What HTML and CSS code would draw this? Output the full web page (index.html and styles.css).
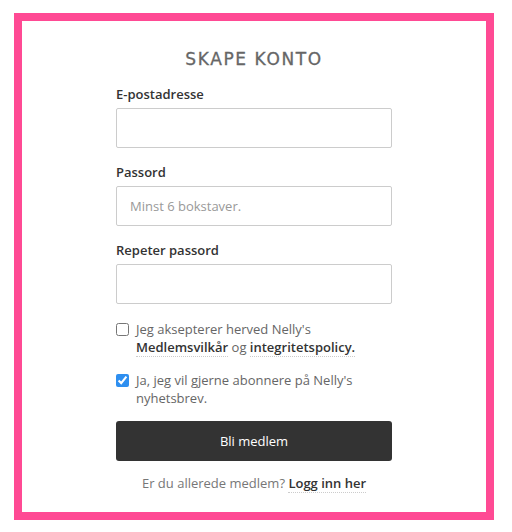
FILE: index.html
```html
<!DOCTYPE html>
<html lang="nb">
<head>
  <meta charset="UTF-8">
  <title>Skape konto</title>
  <link rel="stylesheet" href="styles.css">
</head>
<body>

  <div class="signup">
    <h2>SKAPE KONTO</h2>

    <label class="field-label" for="email">E-postadresse</label>
    <input type="text" id="email">

    <label class="field-label" for="password">Passord</label>
    <input type="password" id="password" placeholder="Minst 6 bokstaver.">

    <label class="field-label" for="repeat">Repeter passord</label>
    <input type="password" id="repeat">

    <label class="check first">
      <input type="checkbox">
      <span>Jeg aksepterer herved Nelly's <a href="#">Medlemsvilkår</a> og <a href="#">integritetspolicy.</a></span>
    </label>

    <label class="check">
      <input type="checkbox" checked>
      <span>Ja, jeg vil gjerne abonnere på Nelly's nyhetsbrev.</span>
    </label>

    <button>Bli medlem</button>

    <p class="login">Er du allerede medlem? <a href="#">Logg inn her</a></p>
  </div>

</body>
</html>
```

FILE: styles.css
```css
* {
  box-sizing: border-box;
}

body {
  margin: 0;
  padding: 0;
  background: #fff;
  font-family: "Open Sans", "Liberation Sans", sans-serif;
  font-size: 13px;
  color: #333;
}

.signup {
  width: 480px;
  margin: 13px 0 0 14px;
  padding: 26px 94px 19px;
  border: 8px solid #ff4a94;
  background: #fff;
}

h2 {
  margin: 0 0 13px;
  text-align: center;
  font-family: "DejaVu Sans", sans-serif;
  font-weight: normal;
  font-size: 17px;
  letter-spacing: 1.6px;
  line-height: 24px;
  color: #666;
  -webkit-text-stroke: 0.3px #666;
}

.field-label {
  display: block;
  font-weight: 600;
  line-height: 20px;
  margin-bottom: 4px;
}

input[type="text"], input[type="password"] {
  display: block;
  width: 100%;
  height: 40px;
  margin: 0 0 14px;
  padding: 0 13px;
  border: 1px solid #ccc;
  border-radius: 2px;
  font-family: inherit;
  font-size: 13px;
  color: #333;
}

input::placeholder {
  color: #999;
}

.check {
  display: flex;
  align-items: flex-start;
  gap: 7px;
  line-height: 18px;
  color: #666;
  margin-top: 15px;
}

.check.first {
  margin-top: 16px;
}

.check input {
  margin: 3px 0 0 0;
  width: 13px;
  height: 13px;
  accent-color: #2e8ff0;
}

.check a, .login a {
  color: #333;
  font-weight: 600;
  text-decoration: none;
  border-bottom: 1px dotted #ccc;
}

button {
  display: block;
  width: 100%;
  height: 40px;
  margin-top: 14px;
  border: none;
  border-radius: 3px;
  background: #333;
  color: #fff;
  font-family: inherit;
  font-size: 13px;
  cursor: pointer;
}

.login {
  margin: 12px 0 0;
  text-align: center;
  line-height: 20px;
  color: #777;
}
```
